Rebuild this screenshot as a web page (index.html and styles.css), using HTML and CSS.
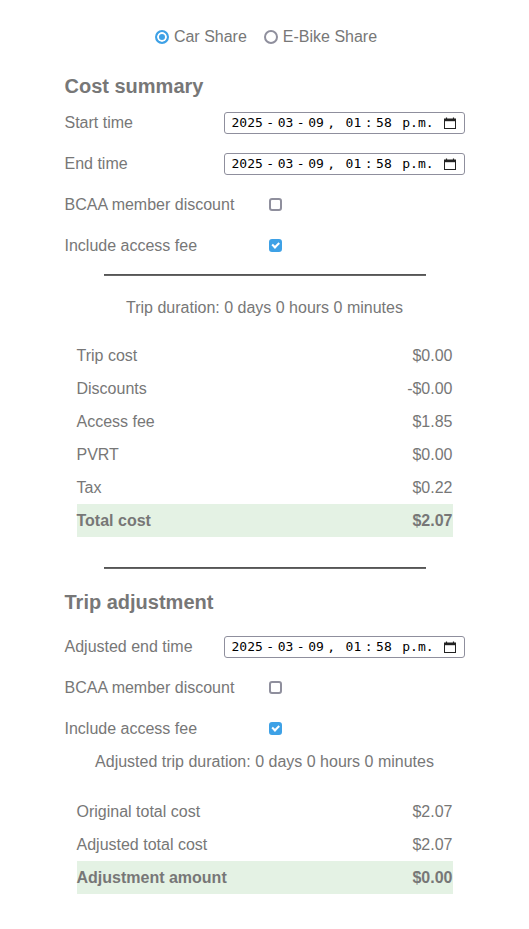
FILE: index.html
```html
<!DOCTYPE html>
<html lang="en-CA">
<head>
<meta charset="utf-8">
<title>Trip cost calculator</title>
<link rel="stylesheet" href="styles.css">
</head>
<body>
<main class="app">
  <div class="modes">
    <label class="mode"><input class="rb" type="radio" name="mode" checked>Car Share</label>
    <label class="mode"><input class="rb" type="radio" name="mode">E-Bike Share</label>
  </div>

  <h2 class="title title-first">Cost summary</h2>
  <div class="field first">
    <span class="label">Start time</span>
    <div class="dt" role="textbox" aria-label="Start time">
      <span>2025</span><span class="sep">-</span><span>03</span><span class="sep">-</span><span>09</span><span class="sep">,</span><span class="gap">01</span><span class="sep">:</span><span>58</span><span class="gap">p.m.</span>
      <svg class="cal" viewBox="0 0 12 12" width="12" height="12" aria-hidden="true"><path d="M2.5 0.5v2M9.5 0.5v2" stroke="#222" stroke-width="1.2"/><rect x="0.5" y="2" width="11" height="9.5" fill="none" stroke="#222" stroke-width="1"/><rect x="0.5" y="2" width="11" height="2.2" fill="#222"/></svg>
    </div>
  </div>
  <div class="field">
    <span class="label">End time</span>
    <div class="dt" role="textbox" aria-label="End time">
      <span>2025</span><span class="sep">-</span><span>03</span><span class="sep">-</span><span>09</span><span class="sep">,</span><span class="gap">01</span><span class="sep">:</span><span>58</span><span class="gap">p.m.</span>
      <svg class="cal" viewBox="0 0 12 12" width="12" height="12" aria-hidden="true"><path d="M2.5 0.5v2M9.5 0.5v2" stroke="#222" stroke-width="1.2"/><rect x="0.5" y="2" width="11" height="9.5" fill="none" stroke="#222" stroke-width="1"/><rect x="0.5" y="2" width="11" height="2.2" fill="#222"/></svg>
    </div>
  </div>
  <div class="field check">
    <span class="label">BCAA member discount</span>
    <input class="cb" type="checkbox">
  </div>
  <div class="field check">
    <span class="label">Include access fee</span>
    <input class="cb" type="checkbox" checked>
  </div>

  <hr class="rule rule-top">
  <p class="duration">Trip duration: 0 days 0 hours 0 minutes</p>

  <table class="costs costs-first">
    <tr><td>Trip cost</td><td class="amt">$0.00</td></tr>
    <tr><td>Discounts</td><td class="amt">-$0.00</td></tr>
    <tr><td>Access fee</td><td class="amt">$1.85</td></tr>
    <tr><td>PVRT</td><td class="amt">$0.00</td></tr>
    <tr><td>Tax</td><td class="amt">$0.22</td></tr>
    <tr class="total"><td>Total cost</td><td class="amt">$2.07</td></tr>
  </table>

  <hr class="rule rule-mid">

  <h2 class="title title-second">Trip adjustment</h2>
  <div class="field second">
    <span class="label">Adjusted end time</span>
    <div class="dt" role="textbox" aria-label="Adjusted end time">
      <span>2025</span><span class="sep">-</span><span>03</span><span class="sep">-</span><span>09</span><span class="sep">,</span><span class="gap">01</span><span class="sep">:</span><span>58</span><span class="gap">p.m.</span>
      <svg class="cal" viewBox="0 0 12 12" width="12" height="12" aria-hidden="true"><path d="M2.5 0.5v2M9.5 0.5v2" stroke="#222" stroke-width="1.2"/><rect x="0.5" y="2" width="11" height="9.5" fill="none" stroke="#222" stroke-width="1"/><rect x="0.5" y="2" width="11" height="2.2" fill="#222"/></svg>
    </div>
  </div>
  <div class="field check">
    <span class="label">BCAA member discount</span>
    <input class="cb" type="checkbox">
  </div>
  <div class="field check">
    <span class="label">Include access fee</span>
    <input class="cb" type="checkbox" checked>
  </div>
  <p class="duration adj">Adjusted trip duration: 0 days 0 hours 0 minutes</p>

  <table class="costs costs-second">
    <tr><td>Original total cost</td><td class="amt">$2.07</td></tr>
    <tr><td>Adjusted total cost</td><td class="amt">$2.07</td></tr>
    <tr class="total"><td>Adjustment amount</td><td class="amt">$0.00</td></tr>
  </table>
</main>
</body>
</html>
```

FILE: styles.css
```css
html, body {
  margin: 0;
  padding: 0;
  background: #fff;
}
body {
  font-family: "Liberation Sans", Arial, sans-serif;
  font-size: 16px;
  color: #777;
}
.app {
  width: 400px;
  margin: 0 auto;
  padding-top: 27px;
  padding-bottom: 30px;
}
.modes {
  display: flex;
  justify-content: center;
  gap: 17px;
  height: 20px;
  align-items: center;
  padding-left: 3px;
}
.mode {
  display: flex;
  align-items: center;
}
.rb {
  appearance: none;
  -webkit-appearance: none;
  width: 14px;
  height: 14px;
  box-sizing: border-box;
  margin: 0 5px 0 0;
  border: 2px solid #8f8f9d;
  border-radius: 50%;
  background: #fff;
}
.rb:checked {
  border-color: #3ea1e6;
  background: #3ea1e6;
  box-shadow: inset 0 0 0 2px #fff;
}
.title {
  font-size: 20px;
  font-weight: bold;
  height: 24px;
  line-height: 24px;
  margin: 0;
}
.title-first { margin-top: 27px; }
.title-second { margin-top: 21px; }
.field {
  display: flex;
  justify-content: space-between;
  align-items: center;
  height: 41px;
}
.field.first { margin-top: 4px; }
.field.second { margin-top: 12px; }
.field.check {
  justify-content: flex-start;
}
.field.check .label {
  width: 204px;
}
.cb {
  appearance: none;
  -webkit-appearance: none;
  position: relative;
  margin: 0;
  width: 13px;
  height: 13px;
  box-sizing: border-box;
  border: 2px solid #8f8f9d;
  border-radius: 3px;
  background: #fff;
}
.cb:checked {
  border-color: #3ea1e6;
  background: #3ea1e6;
}
.cb:checked::after {
  content: "";
  position: absolute;
  left: 1.5px;
  top: 0.5px;
  width: 5px;
  height: 2.5px;
  border-left: 2px solid #fff;
  border-bottom: 2px solid #fff;
  transform: rotate(-45deg);
}
.dt {
  display: flex;
  align-items: center;
  gap: 3.5px;
  font-family: "DejaVu Sans Mono", monospace;
  font-size: 13px;
  width: 241px;
  height: 22px;
  box-sizing: border-box;
  padding: 0 8px 0 7px;
  border: 1px solid #8f8f9d;
  border-radius: 3px;
  color: #000;
  background: #fff;
  white-space: nowrap;
}
.dt .gap { margin-left: 7px; }
.dt .cal { margin-left: auto; }
.rule {
  width: 322px;
  margin: 0 auto;
  border: none;
  border-top: 1px solid #555;
  border-bottom: 1px solid #666;
  height: 0;
}
.rule-top { margin-top: 8px; }
.rule-mid { margin-top: 30px; }
.duration {
  text-align: center;
  margin: 22px 0 0 0;
  height: 20px;
  line-height: 20px;
}
.duration.adj { margin-top: 3px; }
.costs {
  width: 376px;
  margin: 21px auto 0;
  border-collapse: collapse;
}
.costs-second { margin-top: 23px; }
.costs td {
  height: 33px;
  padding: 0;
  line-height: 33px;
}
.costs .amt {
  text-align: right;
}
.total td {
  background: #e4f2e4;
  font-weight: bold;
}
```
